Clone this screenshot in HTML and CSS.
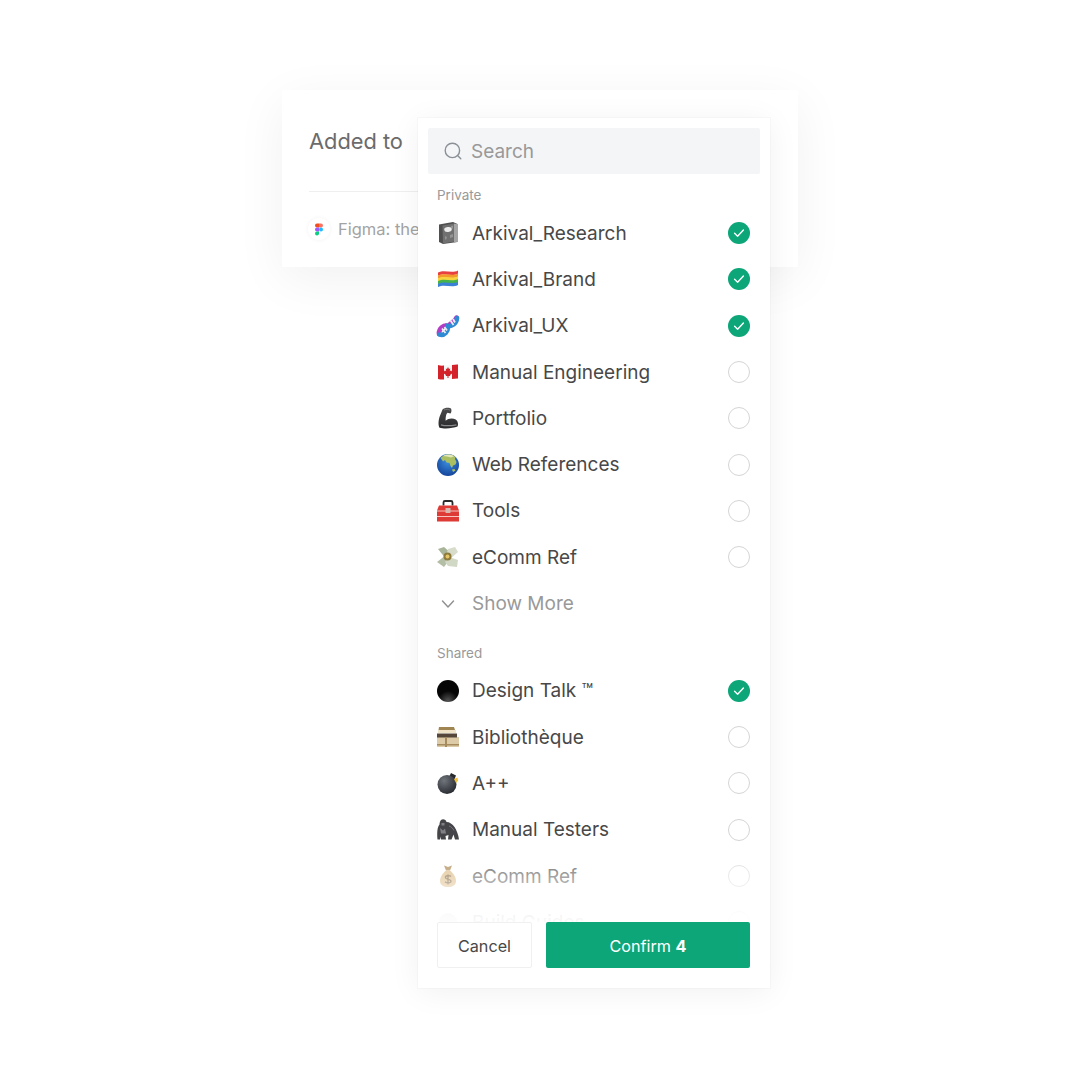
FILE: index.html

```html
<!DOCTYPE html>
<html lang="en">
<head>
    <meta charset="UTF-8">
    <title>Added to</title>
    <link rel="stylesheet" href="styles.css">
</head>
<body>
    <svg class="defs" width="0" height="0">
        <symbol id="check" viewBox="0 0 22 22"><circle cx="11" cy="11" r="11" fill="#0ca678"/><path d="M6.6 11.3l3 3 5.8-6.2" fill="none" stroke="#fff" stroke-width="1.4" stroke-linecap="round" stroke-linejoin="round"/></symbol>
    </svg>

    <div class="stage">
        <!-- Carte derriere le menu -->
        <div class="card">
            <div class="card-title">Added to</div>
            <div class="card-link">
                <span class="figma-badge">
                    <svg width="8" height="13" viewBox="0 0 10 15"><path d="M2.5 0H5v5H2.5a2.5 2.5 0 0 1 0-5z" fill="#f24e1e"/><path d="M5 0h2.5a2.5 2.5 0 0 1 0 5H5z" fill="#ff7262"/><path d="M2.5 5H5v5H2.5a2.5 2.5 0 0 1 0-5z" fill="#a259ff"/><circle cx="7.5" cy="7.5" r="2.5" fill="#1abcfe"/><path d="M2.5 10H5v2.5A2.5 2.5 0 1 1 2.5 10z" fill="#0acf83"/></svg>
                </span>
                <span>Figma: the collaborative</span>
            </div>
        </div>

        <!-- Menu de selection -->
        <div class="picker">
            <div class="search">
                <svg width="20" height="20" viewBox="0 0 20 20" fill="none" stroke="#8a9096" stroke-width="1.4" stroke-linecap="round"><circle cx="9.4" cy="9.4" r="7.2"/><path d="M14.8 14.8l3 3"/></svg>
                <span>Search</span>
            </div>

            <div class="list">
                <div class="group-label">Private</div>

                <div class="row">
                    <svg class="emoji" viewBox="0 0 24 24"><path d="M3 3.5L17 1l4.500 2v18L7 23l-4-2z" fill="#505050"/><path d="M18 2.500l3.500.8v17.500l-3.500.7z" fill="#a5a5a5"/><path d="M6.500 4.500L18 2.500v18L7 22.500z" fill="#707070"/><path d="M8 8l2-2 2 1M14 14l3-1v3l-3 1zM9 15l2 1-1 3-1-1zM15 5l2-.5v3l-2 .5z" fill="#949494"/><ellipse cx="12" cy="8.500" rx="3.800" ry="2.400" fill="#ececec" transform="rotate(-8 12 8.500)"/></svg>
                    <span class="row-name">Arkival_Research</span>
                    <svg class="tick"><use href="#check"/></svg>
                </div>
                <div class="row">
                    <svg class="emoji" viewBox="0 0 24 24"><path d="M2 5.500C9 2 15 7 22 3.500v3.300C15 10.300 9 5.300 2 8.800z" fill="#e8403f"/><path d="M2 8.500C9 5 15 10 22 6.500v3.300C15 13.300 9 8.300 2 11.800z" fill="#f39a2b"/><path d="M2 11.200C9 7.700 15 12.700 22 9.200v3.300C15 16 9 11 2 14.500z" fill="#f7d33c"/><path d="M2 14C9 10.500 15 15.500 22 12v3.300C15 18.800 9 13.800 2 17.300z" fill="#45b34a"/><path d="M2 16.800C9 13.300 15 18.300 22 14.800V18c-7 3.500-13-1.500-20 2z" fill="#3b82d6"/></svg>
                    <span class="row-name">Arkival_Brand</span>
                    <svg class="tick"><use href="#check"/></svg>
                </div>
                <div class="row">
                    <svg class="emoji" viewBox="0 0 24 24"><path d="M3 20C2.500 14.500 8 10.500 12 12c3-3 7.500-5 8.500-8.500" fill="none" stroke="#b23ec4" stroke-width="4.600" stroke-linecap="round"/><path d="M3.500 20.500c5 1.500 9-3 8.500-8.500 3.500.5 8.500-2 9-8" fill="none" stroke="#2f8ad4" stroke-width="4.600" stroke-linecap="round"/><path d="M6 14.500l3.500 4.500M8.500 13l2.500 3.500M14.500 6.500l3 4.500M17 5l2 3.500" stroke="#e6edf5" stroke-width="1.800"/></svg>
                    <span class="row-name">Arkival_UX</span>
                    <svg class="tick"><use href="#check"/></svg>
                </div>
                <div class="row">
                    <svg class="emoji" viewBox="0 0 24 24"><path d="M2 5c2 .6 4 .8 6 .5v14c-2 .3-4 0-6-.5z" fill="#d3222a"/><path d="M16 5c2-.3 4-.6 6-.5v14c-2-.1-4 .2-6 .5z" fill="#d3222a"/><path d="M8 5.500c3-.5 5 0 8-.5v14c-3 .5-5 0-8 .5z" fill="#f7f7f7"/><path d="M12 7l1 2 1.200-.5-.4 2.800 1.300-1 .4 1 1.300-.2-.5 1.500.5.500-2.800 2 .3 1H12.500v2h-1v-2H9.700l.3-1-2.800-2 .5-.5-.5-1.500 1.300.2.400-1 1.300 1-.4-2.800 1.200.5z" fill="#d3222a"/></svg>
                    <span class="row-name">Manual Engineering</span>
                    <span class="radio"></span>
                </div>
                <div class="row">
                    <svg class="emoji" viewBox="0 0 24 24"><defs><linearGradient id="arm" x1="0" y1="0" x2="0" y2="1"><stop offset="0" stop-color="#4b4b4d"/><stop offset="1" stop-color="#2a2a2c"/></linearGradient></defs><path d="M6.500 3.500C8 1.500 13.500 1 15 2.500c.8 1.500.5 4-.5 5l-3-.8-1 1.300c-.8 2.500-1 4.500-.8 6.800 2.500-2.500 7-3 10-1.200 2.500 1.500 2.800 5.500 1.800 7-4 1.800-13 2.500-18 1.200C1.500 18 3 11.500 4.500 8.500z" fill="url(#arm)"/><path d="M5 18.800c4 1.300 10 1 15.500 0" stroke="#8a8a8c" stroke-width="1.300" fill="none"/><path d="M8 4c2-1 4.500-1 6 .200" stroke="#777" stroke-width="1" fill="none"/></svg>
                    <span class="row-name">Portfolio</span>
                    <span class="radio"></span>
                </div>
                <div class="row">
                    <svg class="emoji" viewBox="0 0 24 24"><defs><radialGradient id="sea" cx=".5" cy=".35" r=".7"><stop offset="0" stop-color="#3a8fe0"/><stop offset="1" stop-color="#123f96"/></radialGradient></defs><circle cx="12" cy="12" r="11" fill="url(#sea)"/><path d="M4.500 5C8 1 15 0 19.500 4l-.5 2 1.500 3-1 2.500-2.500 1-1 2.500-1.500-2-1-3-3-.5-1.500-2.500-2 1.500-1-1.500z" fill="#aabf62"/><path d="M7 3c3-2 8-2 11 .2l-3 1.300-4-1z" fill="#e2e6b8"/><path d="M16 16.500l2.500-.5 1 1.500-2.500 1.500z" fill="#aabf62"/></svg>
                    <span class="row-name">Web References</span>
                    <span class="radio"></span>
                </div>
                <div class="row">
                    <svg class="emoji" viewBox="0 0 24 24"><path d="M7.500 6.500V3.500a1.500 1.500 0 0 1 1.500-1.500h6a1.500 1.500 0 0 1 1.500 1.500v3" fill="none" stroke="#2a2a2a" stroke-width="1.800"/><path d="M3 6.500h18l2 5v11H1v-11z" fill="#de3a36"/><path d="M1 12h22M1 17.500h22" stroke="#f7c4bf" stroke-width="1"/><rect x="9.500" y="9" width="5" height="5" rx=".6" fill="#d8b9b0"/></svg>
                    <span class="row-name">Tools</span>
                    <span class="radio"></span>
                </div>
                <div class="row">
                    <svg class="emoji" viewBox="0 0 24 24"><path d="M2 4l6-2 7 6-5 6z" fill="#a9b59a"/><path d="M12 4l7-2 3 5-8 7-4-3z" fill="#d7dccb"/><path d="M1 17l9-7 4 4-6 8z" fill="#b4bea5"/><path d="M13 12l9 3-1 7-9-1-3-4z" fill="#d2d8c6"/><circle cx="11.500" cy="11.500" r="4" fill="#8e7a3c"/><circle cx="11.500" cy="11.500" r="2" fill="#e3c567"/></svg>
                    <span class="row-name">eComm Ref</span>
                    <span class="radio"></span>
                </div>
                <div class="row show-more">
                    <svg class="emoji" viewBox="0 0 24 24" fill="none" stroke="#8f8f8f" stroke-width="1.400" stroke-linecap="round" stroke-linejoin="round"><path d="M6.500 9l5.500 6 5.500-6"/></svg>
                    <span class="row-name">Show More</span>
                </div>

                <div class="group-label group-shared">Shared</div>

                <div class="row">
                    <svg class="emoji" viewBox="0 0 24 24"><defs><radialGradient id="ball" cx=".5" cy=".95" r=".75"><stop offset="0" stop-color="#555"/><stop offset=".6" stop-color="#060606"/></radialGradient></defs><circle cx="12" cy="12" r="11" fill="url(#ball)"/></svg>
                    <span class="row-name">Design Talk ™</span>
                    <svg class="tick"><use href="#check"/></svg>
                </div>
                <div class="row">
                    <svg class="emoji" viewBox="0 0 24 24"><path d="M3 2h15l2 6H2z" fill="#a08452"/><path d="M2 5h18v3H2z" fill="#efe4c8"/><path d="M1 12h22v10H1z" fill="#dccba6"/><path d="M1 8.500h20v4H1z" fill="#55483a"/><path d="M9 12h2v10H9zM1 19h22v1.500H1z" fill="#a58b5e"/></svg>
                    <span class="row-name">Bibliothèque</span>
                    <span class="radio"></span>
                </div>
                <div class="row">
                    <svg class="emoji" viewBox="0 0 24 24"><defs><radialGradient id="bomb" cx=".35" cy=".3" r=".8"><stop offset="0" stop-color="#70757c"/><stop offset="1" stop-color="#22252a"/></radialGradient></defs><path d="M13 6l2-4 5 2.500-2 5z" fill="#26292d"/><circle cx="11" cy="13.500" r="9.500" fill="url(#bomb)"/><path d="M18 8l3.500-1.500.5 3-2 2.500z" fill="#f5c13a"/></svg>
                    <span class="row-name">A++</span>
                    <span class="radio"></span>
                </div>
                <div class="row">
                    <svg class="emoji" viewBox="0 0 24 24"><path d="M5 2c2-1.500 5-.5 5.500 2 3 0 6 2 8 5 2 3 4 8 4.500 12.500h-4l-1.500-5-2 5h-3.500l.5-4.500-3 1 .5 3.500H5l-.5-3L4 21.500H1.500C1 16 1 9 3.500 6.500 3.500 5 4 3 5 2z" fill="#454549"/><path d="M5.500 5h3v2.500h-3zM4 10l3 2.500 2-2 1 5H5z" fill="#808085"/><path d="M13 8c2 .5 4 2.500 5 4.500" stroke="#77777c" fill="none"/></svg>
                    <span class="row-name">Manual Testers</span>
                    <span class="radio"></span>
                </div>
                <div class="row">
                    <svg class="emoji" viewBox="0 0 24 24"><path d="M8 1.500l4 1.500 4-1.500-2 5h-4z" fill="#a47d40"/><path d="M10 6.500h4c3 2.500 6 6.500 6 10.500 0 4-3.500 6-8 6s-8-2-8-6c0-4 3-8 6-10.500z" fill="#d8b274"/><path d="M15 12.500c-1.200-1.300-5.800-1.300-5.600 1.200.2 2.200 5.600 1.200 5.600 3.600 0 2-4.600 2-6 .4M12 10.500v10" fill="none" stroke="#6b4a20" stroke-width="1.300"/></svg>
                    <span class="row-name">eComm Ref</span>
                    <span class="radio"></span>
                </div>
                <div class="row">
                    <svg class="emoji" viewBox="0 0 24 24"><circle cx="12" cy="12" r="9" fill="#bbb"/></svg>
                    <span class="row-name">Build Guides</span>
                    <span class="radio"></span>
                </div>
            </div>

            <div class="list-fade"></div>

            <div class="actions">
                <button class="btn btn-cancel">Cancel</button>
                <button class="btn btn-confirm">Confirm <strong>4</strong></button>
            </div>
        </div>
    </div>
</body>
</html>
```

FILE: styles.css

```css
/* Page */
body {
    margin: 0;
    background-color: #fff;
    font-family: Inter, "Liberation Sans", sans-serif;
    color: #444;
}

.defs {
    position: absolute;
}

.stage {
    position: relative;
    width: 1080px;
    height: 1080px;
    overflow: hidden;
    padding: 90px 0 0 282px;
    box-sizing: border-box;
}

/* Carte du fond */
.card {
    width: 516px;
    height: 177px;
    box-sizing: border-box;
    padding: 37px 28px 0 27px;
    background-color: #fff;
    box-shadow: 0 12px 48px rgba(0, 0, 0, 0.06);
}

.card-title {
    font-size: 21.800px;
    line-height: 28px;
    color: #6b6b6b;
    padding-bottom: 36px;
    border-bottom: 1px solid #efefef;
}

.card-link {
    display: flex;
    align-items: center;
    gap: 8px;
    margin: 26px 0 0 -1px;
    font-size: 16.500px;
    color: #a3a3a3;
    white-space: nowrap;
}

.figma-badge {
    display: flex;
    align-items: center;
    justify-content: center;
    width: 22px;
    height: 22px;
    border-radius: 50%;
    background-color: #fff;
    box-shadow: 0 0 4px rgba(0, 0, 0, 0.06);
}

/* Menu */
.picker {
    position: absolute;
    left: 418px;
    top: 118px;
    width: 352px;
    height: 870px;
    box-sizing: border-box;
    display: flex;
    flex-direction: column;
    background-color: #fff;
    box-shadow: 0 0 0 1px rgba(0, 0, 0, 0.02), 0 4px 30px rgba(0, 0, 0, 0.06);
}

.search {
    display: flex;
    align-items: center;
    gap: 8px;
    height: 46px;
    margin: 10px 10px 0;
    padding-left: 15px;
    border-radius: 2px;
    background-color: #f4f5f7;
    font-size: 19px;
    color: #999;
}

.list {
    flex: 1;
    overflow: hidden;
    padding: 11px 20px 0 19px;
}

.group-label {
    height: 20px;
    line-height: 20px;
    margin-bottom: 5px;
    font-size: 13.500px;
    color: #999;
}

.group-shared {
    margin-top: 16px;
}

.row {
    display: flex;
    align-items: center;
    height: 46.300px;
    font-size: 19px;
    color: #484848;
}

.row-name {
    flex: 1;
    margin-left: 12px;
    white-space: nowrap;
}

.emoji {
    width: 24px;
    height: 24px;
    flex: none;
    margin-left: -1px;
}

.tick {
    width: 22px;
    height: 22px;
    flex: none;
}

.radio {
    width: 20px;
    height: 20px;
    flex: none;
    border: 1px solid #d5d5d5;
    border-radius: 50%;
}

.show-more {
    color: #999;
}

/* Fondu au-dessus des boutons */
.list-fade {
    position: absolute;
    left: 0;
    right: 0;
    bottom: 66px;
    height: 82px;
    background: linear-gradient(rgba(255, 255, 255, 0), rgba(255, 255, 255, 0.5) 45%, rgba(255, 255, 255, 0.93) 88%, rgba(255, 255, 255, 0.97));
}

.actions {
    position: relative;
    display: flex;
    gap: 14px;
    padding: 0 20px 20px 19px;
}

.btn {
    height: 46px;
    padding-top: 2px;
    border-radius: 2px;
    font-family: inherit;
    font-size: 16.200px;
}

.btn-cancel {
    width: 95px;
    border: 1px solid #f0f0f0;
    background-color: #fff;
    color: #484848;
}

.btn-confirm {
    flex: 1;
    border: none;
    background-color: #0ca678;
    color: #fff;
}
```
